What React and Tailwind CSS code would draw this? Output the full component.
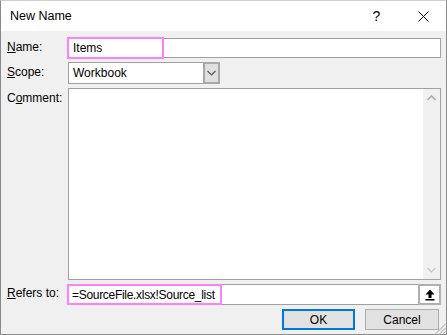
export default function App() {
  const font = { fontFamily: '"Liberation Sans", Arial, sans-serif' };
  return (
    <div className="w-[447px] h-[335px] bg-[#f0f0f0] border border-[#8a8a8a] border-t-[#d0d0d0] flex flex-col text-[12px] text-black overflow-hidden relative" style={font}>
      {/* title bar */}
      <div className="h-[30px] bg-white flex items-center pl-[9px] shrink-0">
        <span className="text-[12.5px] flex-1">New Name</span>
        <span className="w-[45px] text-center text-[14px] mr-[2px]">?</span>
        <div className="w-[45px] h-[30px] flex items-center justify-center">
          <svg width="11" height="11" viewBox="0 0 11 11">
            <path d="M0.5 0.5 L10.5 10.5 M10.5 0.5 L0.5 10.5" stroke="#000" strokeWidth="1" fill="none" />
          </svg>
        </div>
      </div>

      {/* body */}
      <div className="flex flex-col pt-[7px] pl-[6px] pr-[5px] gap-[4px]">
        {/* name */}
        <div className="flex items-center h-[20px]">
          <span className="w-[61px] -mt-[2px]"><u>N</u>ame:</span>
          <div className="relative flex-1 h-[20px] bg-white border border-[#a0a0a0] flex items-center pl-[4px]">
            Items
            <div className="absolute left-[-2px] top-[-2px] w-[97px] h-[22px] border-2 border-[#ff80ff]" />
          </div>
        </div>

        {/* scope */}
        <div className="flex items-center h-[22px]">
          <span className="w-[61px] -mt-[2px]"><u>S</u>cope:</span>
          <div className="w-[152px] h-[22px] bg-white border border-[#a0a0a0] flex items-center">
            <span className="flex-1 pl-[4px]">Workbook</span>
            <div className="w-[17px] h-[22px] -mr-px -my-px bg-[#e0e0e0] border-2 border-[#a8a8a8] flex items-center justify-center">
              <svg width="9" height="6" viewBox="0 0 9 6">
                <path d="M0.5 1 L4.5 5 L8.5 1" stroke="#555" strokeWidth="1.2" fill="none" />
              </svg>
            </div>
          </div>
        </div>

        {/* comment */}
        <div className="flex items-start h-[192px]">
          <span className="w-[61px] pt-[1px]">C<u>o</u>mment:</span>
          <div className="flex-1 h-[192px] bg-white border border-[#a0a0a0] flex justify-end">
            <div className="w-[17px] h-full bg-[#f0f0f0] flex flex-col justify-between items-center py-[6px]">
              <svg width="9" height="6" viewBox="0 0 9 6">
                <path d="M0.5 5 L4.5 1 L8.5 5" stroke="#a8a8a8" strokeWidth="1.5" fill="none" />
              </svg>
              <svg width="9" height="6" viewBox="0 0 9 6">
                <path d="M0.5 1 L4.5 5 L8.5 1" stroke="#c4c4c4" strokeWidth="1.2" fill="none" />
              </svg>
            </div>
          </div>
        </div>

        {/* refers to */}
        <div className="flex items-center h-[21px]">
          <span className="w-[61px] -mt-[4px]"><u>R</u>efers to:</span>
          <div className="relative flex-1 h-[21px] bg-white border border-[#a0a0a0] flex items-center">
            <span className="flex-1 pl-[3px] tracking-[-0.3px]">=SourceFile.xlsx!Source_list</span>
            <div className="absolute left-[-2px] top-[-1px] w-[155px] h-[21px] border-2 border-[#ff80ff]" />
            <div className="w-[23px] h-[21px] -mr-px -my-px bg-white border-2 border-[#b0b0b0] flex items-center justify-center">
              <svg width="10" height="12" viewBox="0 0 10 12">
                <path d="M5 0.5 L9.5 5.5 L6.5 5.5 L6.5 9 L3.5 9 L3.5 5.5 L0.5 5.5 Z" fill="#000" />
                <rect x="0.5" y="10" width="9" height="1.5" fill="#000" />
              </svg>
            </div>
          </div>
        </div>

        {/* buttons */}
        <div className="flex justify-end gap-[10px] pr-[2px] h-[21px]">
          <button className="w-[73px] h-[21px] bg-[#e1e1e1] border-2 border-[#0078d7] flex items-center justify-center">OK</button>
          <button className="w-[74px] h-[21px] bg-[#e1e1e1] border border-[#adadad] flex items-center justify-center">Cancel</button>
        </div>
      </div>

      {/* resize grip */}
      <svg className="absolute right-0 bottom-0" width="11" height="11" viewBox="0 0 11 11">
        <path d="M10.5 1 L1 10.5 M10.5 5 L5 10.5 M10.5 8.5 L8.5 10.5" stroke="#a0a0a0" strokeWidth="1" />
      </svg>
    </div>
  );
}
